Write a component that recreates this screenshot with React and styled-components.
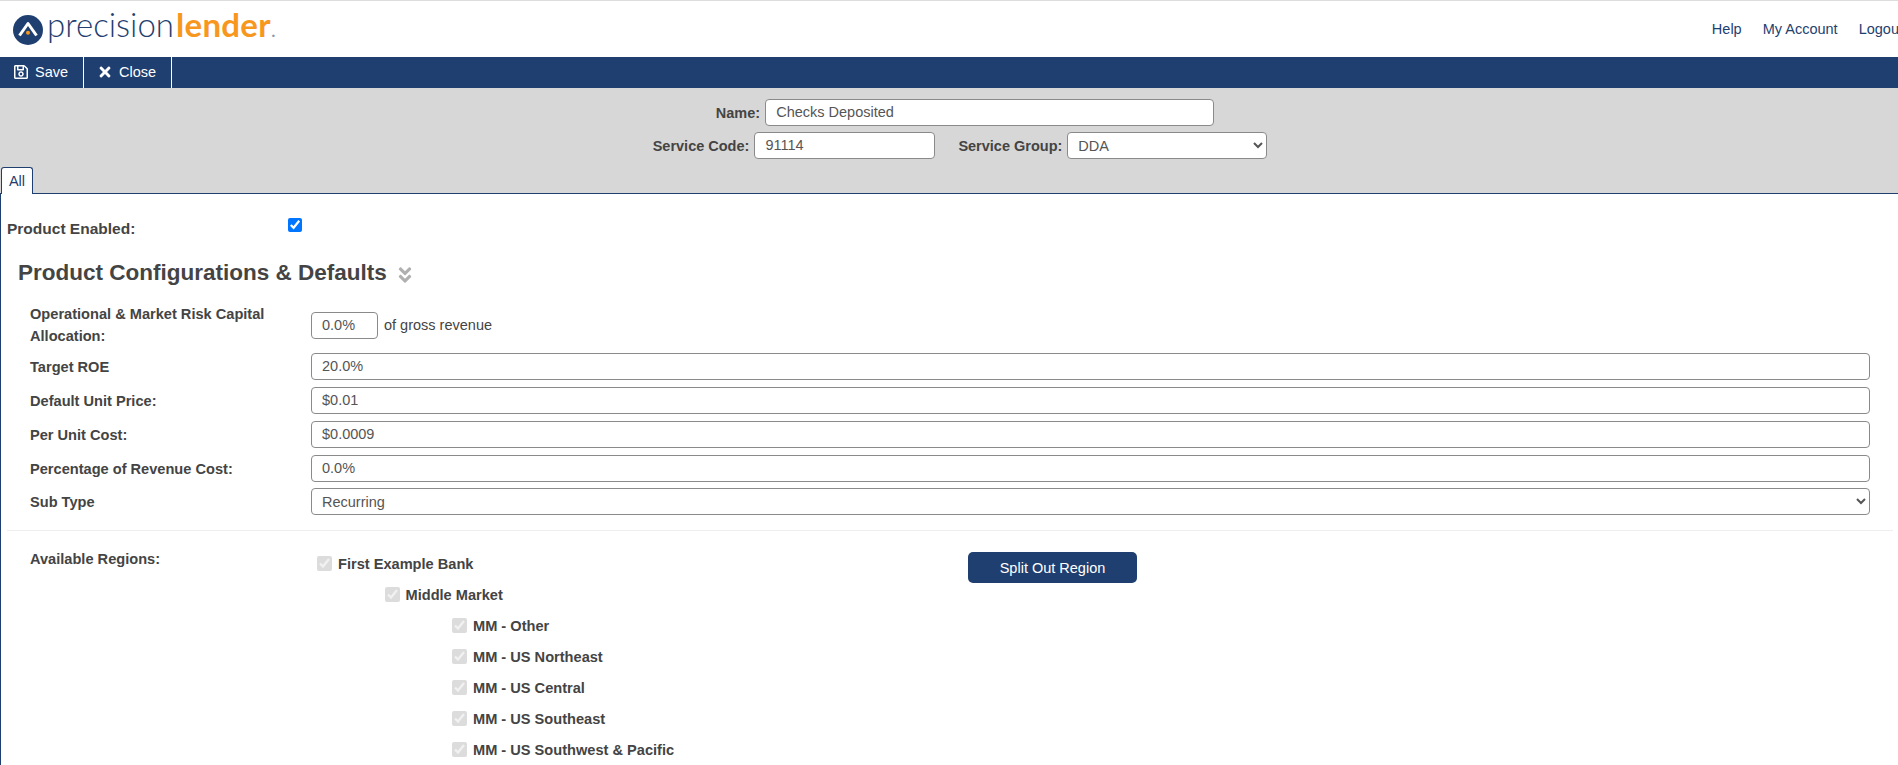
import React from "react";
import styled, { createGlobalStyle } from "styled-components";
import { FaRegSave, FaTimes, FaAngleDoubleDown } from "react-icons/fa";

const navy = "#1f3f70";

const GlobalStyle = createGlobalStyle`
  html, body {
    margin: 0;
    height: 100%;
    overflow: hidden;
    background: #fff;
  }
  body {
    font-family: "Liberation Sans", Arial, sans-serif;
    font-size: 14.5px;
    color: #444;
  }
`;

const regions = [
  { name: "First Example Bank", level: 0 },
  { name: "Middle Market", level: 1 },
  { name: "MM - Other", level: 2 },
  { name: "MM - US Northeast", level: 2 },
  { name: "MM - US Central", level: 2 },
  { name: "MM - US Southeast", level: 2 },
  { name: "MM - US Southwest & Pacific", level: 2 },
];

const fields = [
  { label: "Target ROE", value: "20.0%" },
  { label: "Default Unit Price:", value: "$0.01" },
  { label: "Per Unit Cost:", value: "$0.0009" },
  { label: "Percentage of Revenue Cost:", value: "0.0%" },
];

function Logo() {
  return (
    <LogoWrap>
      <svg width="32" height="32" viewBox="0 0 32 32">
        <circle cx="16" cy="16" r="15" fill={navy} />
        <path
          d="M7.5 21.5 L16 9.5 L24.5 21.5"
          fill="none"
          stroke="#fff"
          strokeWidth="3"
          strokeLinejoin="round"
        />
        <circle cx="16" cy="18.7" r="2" fill="#f7971d" />
      </svg>
      <LogoText>
        <LogoLight>precision</LogoLight>
        <LogoBold>lender</LogoBold>
        <LogoDot>.</LogoDot>
      </LogoText>
    </LogoWrap>
  );
}

export default function App() {
  return (
    <>
      <GlobalStyle />
      <Header>
        <Logo />
        <Links>
          <a>Help</a>
          <a>My Account</a>
          <a>Logout</a>
        </Links>
      </Header>

      <Toolbar>
        <ToolButton>
          <FaRegSave />
          Save
        </ToolButton>
        <ToolButton>
          <FaTimes />
          Close
        </ToolButton>
      </Toolbar>

      <GreyPanel>
        <NameRow $shift={32}>
          <label>Name:</label>
          <TextInput $width="449px" defaultValue="Checks Deposited" />
        </NameRow>
        <NameRow $shift={22}>
          <label>Service Code:</label>
          <TextInput $width="181px" defaultValue="91114" />
          <GroupLabel>Service Group:</GroupLabel>
          <SelectInput $width="200px" defaultValue="DDA">
            <option>DDA</option>
          </SelectInput>
        </NameRow>
        <TabStrip>
          <Tab>All</Tab>
        </TabStrip>
      </GreyPanel>

      <Body>
        <EnabledRow>
          <label>Product Enabled:</label>
          <BlueCheck type="checkbox" defaultChecked />
        </EnabledRow>

        <Heading>
          Product Configurations &amp; Defaults
          <FaAngleDoubleDown />
        </Heading>

        <Fields>
          <CapitalRow>
            <FieldLabel>Operational &amp; Market Risk Capital Allocation:</FieldLabel>
            <CapitalValue>
              <TextInput $width="67px" defaultValue="0.0%" />
              <span>of gross revenue</span>
            </CapitalValue>
          </CapitalRow>
          {fields.map((field) => (
            <FieldRow key={field.label}>
              <FieldLabel>{field.label}</FieldLabel>
              <TextInput defaultValue={field.value} />
            </FieldRow>
          ))}
          <SubTypeRow>
            <FieldLabel>Sub Type</FieldLabel>
            <SelectInput defaultValue="Recurring">
              <option>Recurring</option>
            </SelectInput>
          </SubTypeRow>
        </Fields>

        <Divider />

        <RegionSection>
          <RegionLabel>Available Regions:</RegionLabel>
          <RegionList>
            {regions.map((region) => (
              <RegionRow key={region.name} $level={region.level}>
                <input type="checkbox" checked disabled readOnly />
                {region.name}
              </RegionRow>
            ))}
          </RegionList>
          <SplitButton>Split Out Region</SplitButton>
        </RegionSection>
      </Body>
    </>
  );
}

const Header = styled.header`
  height: 56px;
  border-top: 1px solid #ddd;
  display: flex;
  align-items: center;
  justify-content: space-between;
  box-sizing: content-box;
`;

const LogoWrap = styled.div`
  display: flex;
  align-items: center;
  padding-left: 12px;
  white-space: nowrap;

  svg {
    margin: 1px 3px 0 0;
  }
`;

const LogoText = styled.div`
  display: flex;
  align-items: baseline;
  line-height: 40px;
  margin-bottom: 6px;
`;

const LogoLight = styled.span`
  font-family: "Lato", sans-serif;
  font-weight: 300;
  font-size: 33px;
  color: ${navy};
`;

const LogoBold = styled.span`
  font-family: "Lato", sans-serif;
  font-weight: 700;
  font-size: 33px;
  letter-spacing: 0.3px;
  margin-left: 2px;
  color: #f7971d;
`;

const LogoDot = styled.span`
  font-family: "Lato", sans-serif;
  font-size: 20px;
  color: #8a97ad;
`;

const Links = styled.nav`
  display: flex;
  gap: 21px;
  margin-right: -5px;

  a {
    color: ${navy};
    cursor: pointer;
  }
`;

const Toolbar = styled.div`
  height: 31px;
  background: ${navy};
  display: flex;
`;

const ToolButton = styled.div`
  display: flex;
  align-items: center;
  gap: 6px;
  padding: 0 15px 1px 13px;
  color: #fff;
  border-right: 1px solid #fff;
  cursor: pointer;

  svg {
    font-size: 16px;
  }
`;

const GreyPanel = styled.div`
  background: #d7d7d7;
  padding-top: 11px;
  display: flex;
  flex-direction: column;
  gap: 6px;
`;

const NameRow = styled.div`
  display: flex;
  align-items: center;
  justify-content: center;
  gap: 5px;
  padding-left: ${(p) => p.$shift}px;

  label {
    font-weight: 700;
    color: #444;
  }
`;

const GroupLabel = styled.label`
  margin-left: 18px;
`;

const TextInput = styled.input`
  box-sizing: border-box;
  height: 27px;
  width: ${(p) => p.$width || "100%"};
  border: 1px solid #8a8a8a;
  border-radius: 4px;
  padding: 0 10px 1px;
  background: #fff;
  color: #555;
  font: inherit;
`;

const SelectInput = styled.select`
  box-sizing: border-box;
  height: 27px;
  width: ${(p) => p.$width || "100%"};
  border: 1px solid #8a8a8a;
  border-radius: 4px;
  padding: 0 6px;
  background: #fff;
  color: #555;
  font: inherit;
`;

const TabStrip = styled.div`
  display: flex;
  margin-top: 1px;
  padding-left: 1px;
`;

const Tab = styled.div`
  position: relative;
  top: 1px;
  box-sizing: border-box;
  height: 27px;
  width: 32px;
  display: flex;
  align-items: center;
  justify-content: center;
  background: #fff;
  color: ${navy};
  border: 1px solid ${navy};
  border-bottom: none;
  border-radius: 3px 3px 0 0;
`;

const Body = styled.main`
  border-top: 1px solid ${navy};
  border-left: 1px solid ${navy};
  height: 600px;
`;

const EnabledRow = styled.div`
  display: grid;
  grid-template-columns: 281px auto;
  justify-content: start;
  padding: 24px 0 0 6px;
  height: 22px;

  label {
    font-weight: 700;
    font-size: 15.5px;
    line-height: 22px;
  }
`;

const BlueCheck = styled.input`
  margin: 0;
  width: 14px;
  height: 14px;
`;

const Heading = styled.h2`
  margin: 19px 0 0 17px;
  font-size: 22.5px;
  line-height: 28px;
  font-weight: 700;
  color: #444;
  display: flex;
  align-items: center;
  gap: 8px;

  svg {
    font-size: 20px;
    color: #b0b0b0;
    margin-top: 3px;
  }
`;

const Fields = styled.div`
  margin-top: 16px;
  padding: 0 28px 0 29px;
  display: flex;
  flex-direction: column;
  gap: 7px;
`;

const FieldRow = styled.div`
  display: grid;
  grid-template-columns: 281px 1fr;
  align-items: center;
`;

const CapitalRow = styled(FieldRow)`
  height: 43px;
`;

const SubTypeRow = styled(FieldRow)`
  margin-top: -1px;
`;

const FieldLabel = styled.label`
  font-weight: 700;
  font-size: 14.6px;
  line-height: 22px;
  width: 250px;
  color: #444;
`;

const CapitalValue = styled.div`
  display: flex;
  align-items: center;
  gap: 6px;
`;

const Divider = styled.hr`
  margin: 15px 5px 0 6px;
  border: none;
  border-top: 1px solid #eee;
`;

const RegionSection = styled.section`
  display: flex;
  padding: 20px 0 0 29px;
`;

const RegionLabel = styled.label`
  width: 287px;
  font-weight: 700;
  font-size: 14.6px;
  color: #444;
`;

const RegionList = styled.div`
  width: 651px;
  margin-top: -3px;
  display: flex;
  flex-direction: column;
`;

const RegionRow = styled.label`
  height: 31px;
  display: flex;
  align-items: center;
  gap: 6px;
  font-weight: 700;
  font-size: 14.6px;
  margin-left: ${(p) => p.$level * 67.5}px;
  color: #444;

  input {
    margin: 0;
    width: 15px;
    height: 15px;
    opacity: 0.75;
  }
`;

const SplitButton = styled.button`
  align-self: flex-start;
  width: 169px;
  height: 31px;
  margin-top: 1px;
  background: ${navy};
  color: #fff;
  border: none;
  border-radius: 5px;
  font: inherit;
  cursor: pointer;
`;
